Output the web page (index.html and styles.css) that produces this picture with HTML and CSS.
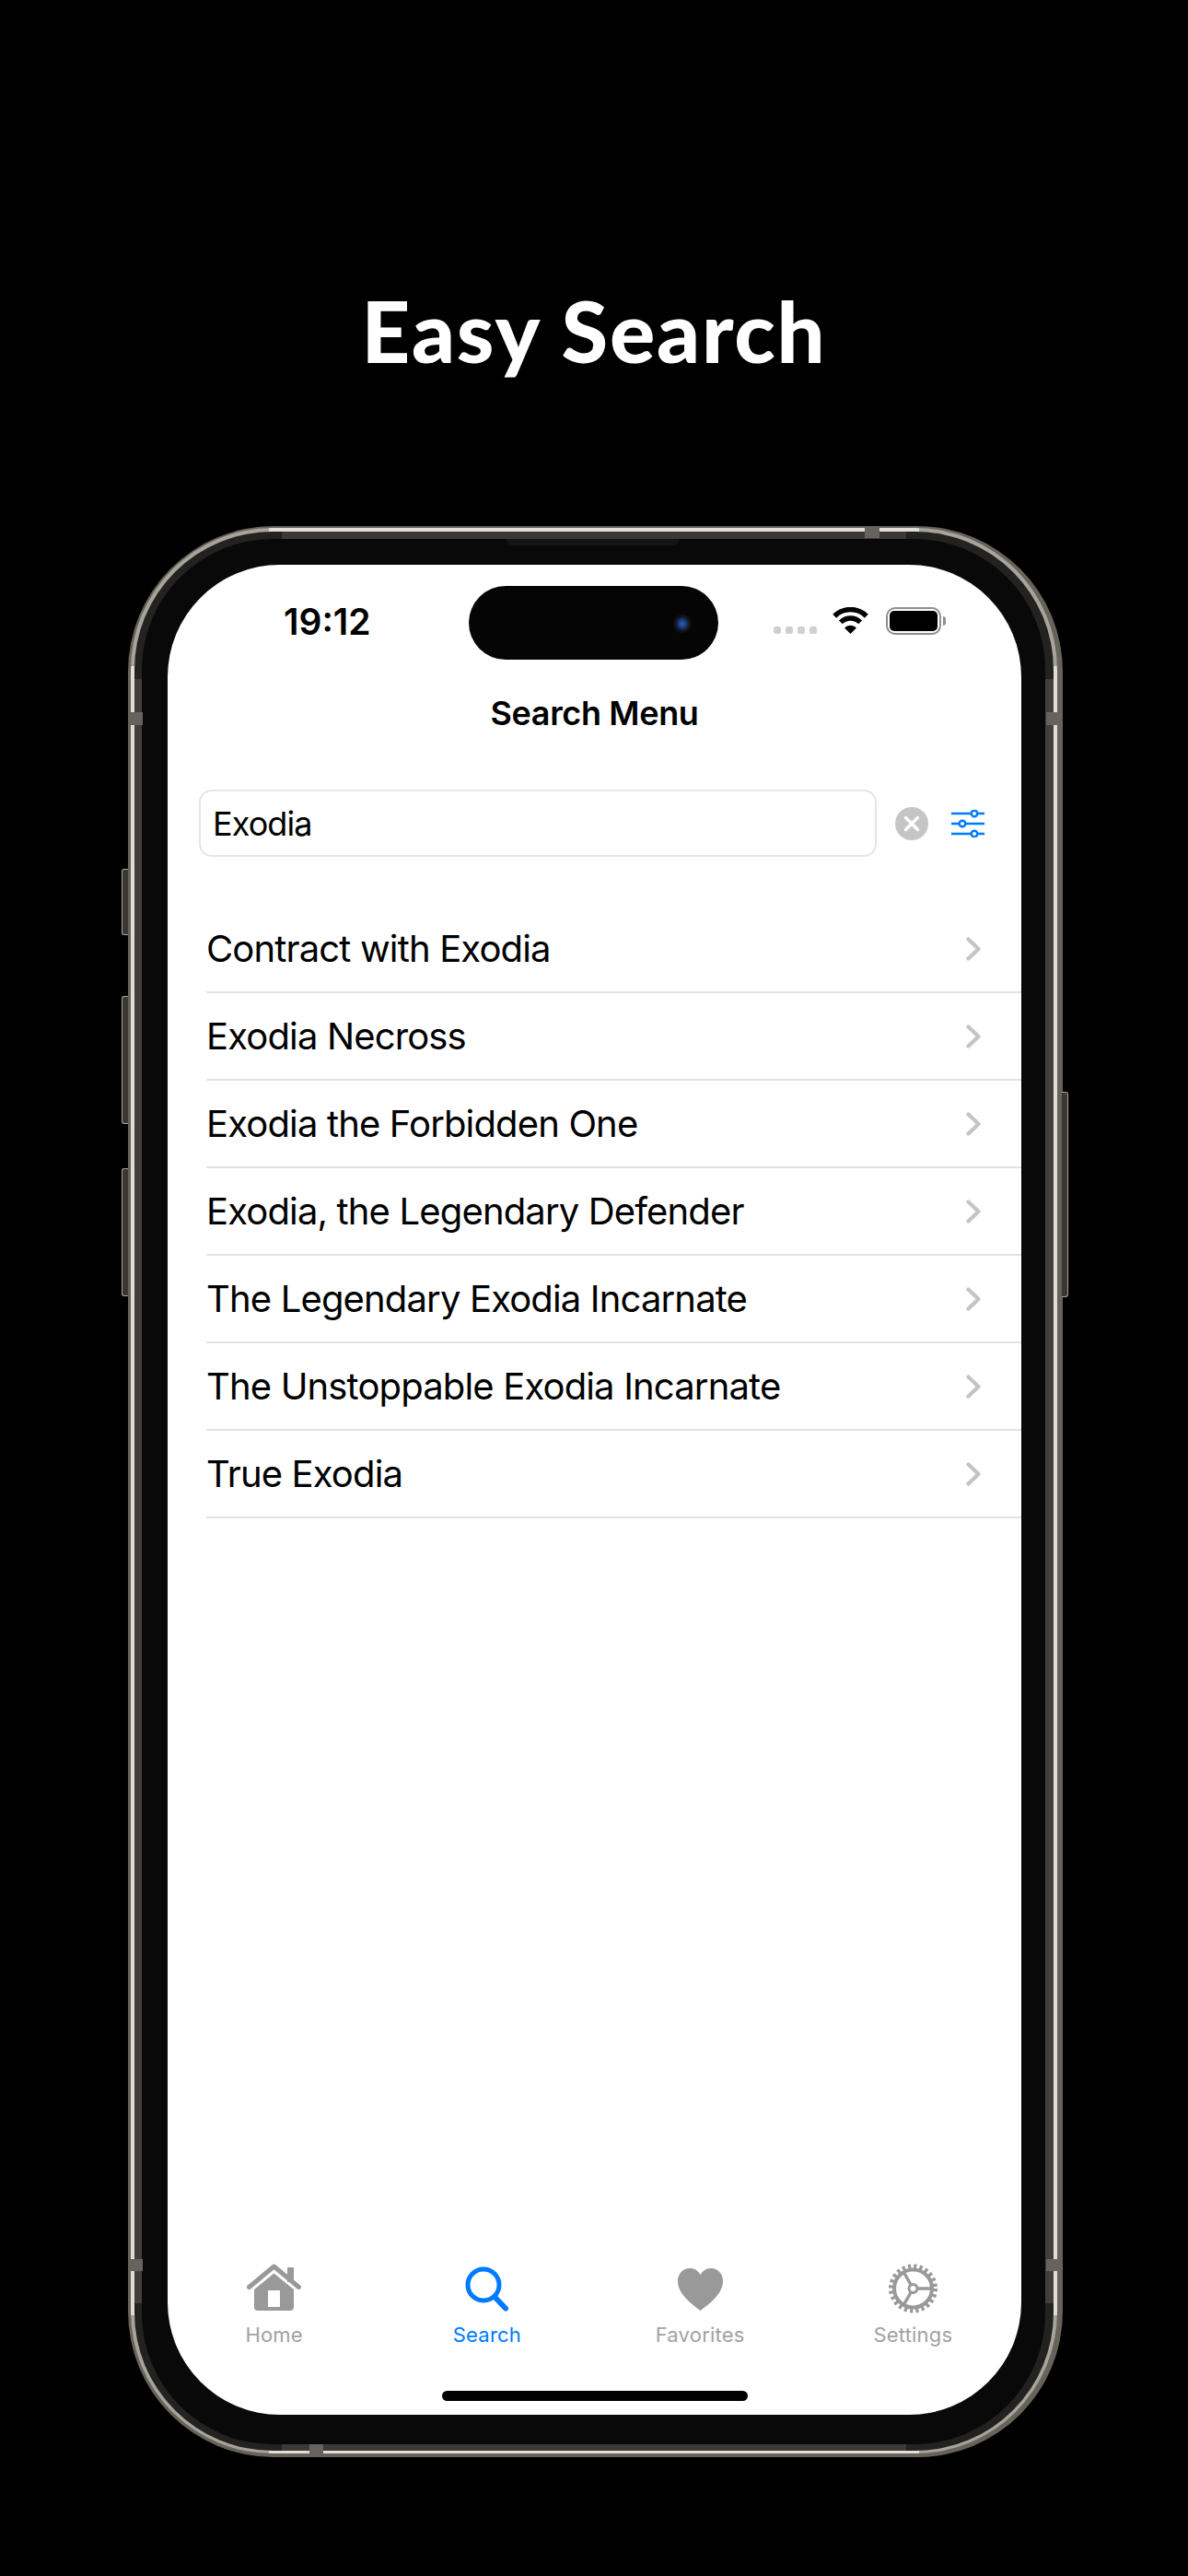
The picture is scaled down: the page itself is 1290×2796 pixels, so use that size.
FILE: index.html
```html
<!DOCTYPE html>
<html lang="en">
<head>
<meta charset="utf-8">
<title>Easy Search</title>
<link rel="stylesheet" href="styles.css">
</head>
<body>
<h1 class="headline">Easy Search</h1>
<div class="phone">
  <span class="btn btn-mute"></span><span class="btn btn-up"></span><span class="btn btn-down"></span><span class="btn btn-power"></span>
  <div class="rim-bright"><div class="rim-gray"><div class="bezel">
    <span class="speaker"></span>
    <main class="screen">
      <div class="status">
        <div class="time">19:12</div>
        <div class="island"><span class="camera"></span></div>
        <div class="status-icons">
          <div class="dots"><i></i><i></i><i></i><i></i></div>
          <svg class="wifi" width="41" height="29" viewBox="0 0 41 29"><path d="M3.2 9.7A24.5 24.5 0 0 1 37.8 9.7M9.9 16.4A15 15 0 0 1 31.1 16.4" fill="none" stroke="#000" stroke-width="5.5"/><path d="M20.5 29L14 22.5A9.2 9.2 0 0 1 27 22.5Z" fill="#000"/></svg>
          <div class="battery"><div class="battery-fill"></div></div>
          <div class="battery-nub"></div>
        </div>
      </div>
      <div class="title">Search Menu</div>
      <div class="search-row">
        <div class="field">Exodia</div>
        <svg class="clear" width="36" height="36" viewBox="0 0 36 36"><circle cx="18" cy="18" r="18" fill="#c5c5c5"/><path d="M11.5 11.5L24.5 24.5M24.5 11.5L11.5 24.5" stroke="#fff" stroke-width="3.4" stroke-linecap="round"/></svg>
        <svg class="filter" width="36" height="30" viewBox="0 0 36 30" fill="none" stroke="#007aff"><path d="M0 4H36M0 15H36M0 26H36" stroke-width="2.6"/><circle cx="25" cy="4" r="3.3" fill="#fff" stroke-width="2.4"/><circle cx="12" cy="15" r="3.3" fill="#fff" stroke-width="2.4"/><circle cx="25" cy="26" r="3.3" fill="#fff" stroke-width="2.4"/></svg>
      </div>
      <ul class="list">
        <li class="row">Contract with Exodia<svg class="chev" width="16" height="26" viewBox="0 0 16 26"><path d="M2.5 2.5L13.5 13L2.5 23.5" fill="none" stroke="#c4c4c4" stroke-width="4.2" stroke-linecap="round" stroke-linejoin="round"/></svg></li>
        <li class="row">Exodia Necross<svg class="chev" width="16" height="26" viewBox="0 0 16 26"><path d="M2.5 2.5L13.5 13L2.5 23.5" fill="none" stroke="#c4c4c4" stroke-width="4.2" stroke-linecap="round" stroke-linejoin="round"/></svg></li>
        <li class="row">Exodia the Forbidden One<svg class="chev" width="16" height="26" viewBox="0 0 16 26"><path d="M2.5 2.5L13.5 13L2.5 23.5" fill="none" stroke="#c4c4c4" stroke-width="4.2" stroke-linecap="round" stroke-linejoin="round"/></svg></li>
        <li class="row">Exodia, the Legendary Defender<svg class="chev" width="16" height="26" viewBox="0 0 16 26"><path d="M2.5 2.5L13.5 13L2.5 23.5" fill="none" stroke="#c4c4c4" stroke-width="4.2" stroke-linecap="round" stroke-linejoin="round"/></svg></li>
        <li class="row">The Legendary Exodia Incarnate<svg class="chev" width="16" height="26" viewBox="0 0 16 26"><path d="M2.5 2.5L13.5 13L2.5 23.5" fill="none" stroke="#c4c4c4" stroke-width="4.2" stroke-linecap="round" stroke-linejoin="round"/></svg></li>
        <li class="row">The Unstoppable Exodia Incarnate<svg class="chev" width="16" height="26" viewBox="0 0 16 26"><path d="M2.5 2.5L13.5 13L2.5 23.5" fill="none" stroke="#c4c4c4" stroke-width="4.2" stroke-linecap="round" stroke-linejoin="round"/></svg></li>
        <li class="row">True Exodia<svg class="chev" width="16" height="26" viewBox="0 0 16 26"><path d="M2.5 2.5L13.5 13L2.5 23.5" fill="none" stroke="#c4c4c4" stroke-width="4.2" stroke-linecap="round" stroke-linejoin="round"/></svg></li>
      </ul>
      <nav class="tabs">
        <div class="tab">
          <svg class="tab-icon" width="59" height="54" viewBox="0 0 59 54"><path d="M44 4h7v16h-7z" fill="#999"/><path d="M2.5 25.5L29.5 3L56.500 25.500" fill="none" stroke="#999" stroke-width="5" stroke-linecap="round" stroke-linejoin="round"/><path fill-rule="evenodd" d="M8 28L29.500 10.500L51 28V47a4 4 0 0 1-4 4H12a4 4 0 0 1-4-4ZM23 29V47H36V29Z" fill="#999"/></svg>
          <span>Home</span>
        </div>
        <div class="tab tab-on">
          <svg class="tab-icon" width="59" height="54" viewBox="0 0 59 54"><circle cx="26" cy="23" r="17" fill="none" stroke="#007aff" stroke-width="5"/><path d="M39 37L50 48.500" stroke="#007aff" stroke-width="6" stroke-linecap="round"/></svg>
          <span>Search</span>
        </div>
        <div class="tab">
          <svg class="tab-icon" width="59" height="54" viewBox="0 0 59 54"><path d="M29.500 51C25 47 5 35 5 19C5 11 10.500 5 18 5C23 5 27 7.500 29.500 12C32 7.500 36 5 41 5C48.500 5 54 11 54 19C54 35 34 47 29.500 51Z" fill="#999"/></svg>
          <span>Favorites</span>
        </div>
        <div class="tab">
          <svg class="tab-icon" width="59" height="54" viewBox="0 0 59 54" fill="none" stroke="#999"><circle cx="29.500" cy="27" r="24" stroke-width="5" stroke-dasharray="3.2 3.083"/><circle cx="29.500" cy="27" r="20.500" stroke-width="4"/><path d="M34 27H50M27.200 23L19.200 9.200M27.200 31L19.200 44.800" stroke-width="3.400"/><circle cx="29.500" cy="27" r="4.500" stroke-width="3"/></svg>
          <span>Settings</span>
        </div>
      </nav>
      <div class="home-indicator"></div>
    </main>
  </div></div></div>
  <span class="band band-lt"></span><span class="band band-rt"></span><span class="band band-top"></span><span class="band band-bot"></span><span class="band band-lb"></span><span class="band band-rb"></span>
</div>
</body>
</html>
```
FILE: styles.css
```css
* { box-sizing: border-box; }
html, body { margin: 0; padding: 0; }
body {
  width: 1290px;
  height: 2796px;
  background: #000;
  font-family: Inter, "Liberation Sans", sans-serif;
  color: #000;
  overflow: hidden;
}
.headline {
  margin: 0;
  height: 571px;
  padding-top: 304px;
  text-align: center;
  font-family: Lato, sans-serif;
  font-weight: 900;
  font-size: 92px;
  letter-spacing: 1.8px;
  line-height: 110px;
  color: #fff;
}
.phone {
  position: relative;
  width: 1015px;
  height: 2096px;
  margin-left: 139px;
  background: #66635b;
  border-radius: 158px;
  padding: 2px 6px 4px 3px;
}
.rim-bright {
  height: 100%;
  background:
    linear-gradient(#e2ded7, #e2ded7) center / 100% calc(100% - 300px) no-repeat,
    linear-gradient(#e2ded7, #e2ded7) center / calc(100% - 300px) 100% no-repeat,
    #a8a49c;
  border-radius: 154px;
  padding: 4px 4px 3px 4px;
}
.rim-gray {
  height: 100%;
  background:
    linear-gradient(#403f3e, #403f3e) center / 100% calc(100% - 320px) no-repeat,
    linear-gradient(#3a3936, #3a3936) center / calc(100% - 320px) 100% no-repeat,
    #222221;
  border-radius: 150px;
  padding: 8px 9px 7px 8px;
}
.bezel {
  position: relative;
  height: 100%;
  background: #090909;
  border-radius: 142px;
  padding: 28px 26px 32px 28px;
}
.speaker {
  position: absolute;
  left: 396px;
  top: 0;
  width: 187px;
  height: 7px;
  background: #141414;
  border-radius: 0 0 6px 6px;
}
.btn {
  position: absolute;
  width: 7px;
  background: #3a3632;
  border: 1.5px solid #a8a49c;
}
.btn-mute { left: -7px; top: 372px; height: 72px; border-right: 0; border-radius: 3px 0 0 3px; }
.btn-up { left: -7px; top: 510px; height: 139px; border-right: 0; border-radius: 3px 0 0 3px; }
.btn-down { left: -7px; top: 697px; height: 139px; border-right: 0; border-radius: 3px 0 0 3px; }
.btn-power { right: -6px; top: 614px; height: 223px; border-left: 0; border-radius: 0 3px 3px 0; }
.band { position: absolute; background: #66635f; }
.band-lt { left: 3px; top: 202px; width: 13px; height: 14px; }
.band-rt { right: 0; top: 202px; width: 18px; height: 14px; }
.band-top { left: 800px; top: 2px; width: 16px; height: 11px; }
.band-bot { left: 197px; bottom: 1px; width: 15px; height: 13px; }
.band-lb { left: 3px; top: 1881px; width: 13px; height: 13px; }
.band-rb { right: 0; top: 1881px; width: 18px; height: 13px; }

.screen {
  height: 100%;
  width: 927px;
  background: #fff;
  border-radius: 122px;
  overflow: hidden;
  display: flex;
  flex-direction: column;
}
.status {
  display: grid;
  grid-template-columns: 327px 271px 1fr;
  padding-top: 23px;
  height: 103px;
}
.time {
  padding: 16px 0 0 126px;
  font-size: 39px;
  line-height: 46px;
  font-weight: 600;
}
.island {
  height: 80px;
  background: #050505;
  border-radius: 40px;
  position: relative;
}
.camera {
  position: absolute;
  left: 222px;
  top: 31px;
  width: 20px;
  height: 20px;
  border-radius: 50%;
  background: radial-gradient(circle, #2c5fb0 0, #1c3a78 30%, #10131c 55%, #0b0b0e 100%);
}
.status-icons {
  display: flex;
  align-items: flex-start;
  padding: 23px 0 0 60px;
}
.dots { display: flex; gap: 5px; margin-top: 21px; }
.dots i { width: 8px; height: 8px; border-radius: 2.500px; background: #d0d0d0; }
.wifi { margin-left: 16px; }
.battery {
  margin-left: 18px;
  width: 60px;
  height: 30px;
  border: 2.500px solid #8e8e8e;
  border-radius: 10px;
  padding: 2px;
}
.battery-fill { height: 100%; background: #000; border-radius: 5px; }
.battery-nub { width: 3px; height: 10px; margin: 10px 0 0 2px; background: #8e8e8e; border-radius: 0 3px 3px 0; }
.title {
  text-align: center;
  font-size: 36px;
  font-weight: 600;
  line-height: 44px;
  padding-top: 36px;
  height: 141px;
  letter-spacing: -0.35px;
}
.search-row {
  display: flex;
  align-items: center;
  padding-left: 34px;
  height: 73px;
}
.field {
  width: 736px;
  height: 73px;
  border: 2px solid #e6e6e6;
  border-radius: 14px;
  padding-left: 13px;
  font-size: 36px;
  letter-spacing: -0.9px;
  line-height: 70px;
}
.clear { margin-left: 20px; }
.filter { margin-left: 25px; }
.list {
  list-style: none;
  margin: 53px 0 0;
  padding: 0 0 0 42px;
  flex: 1;
}
.row {
  display: flex;
  align-items: center;
  justify-content: space-between;
  height: 95px;
  padding: 0 44px 0 0;
  border-bottom: 2px solid #e2e2e2;
  font-size: 40px;
  letter-spacing: -0.85px;
}
.tabs {
  display: grid;
  grid-template-columns: repeat(4, 1fr);
  padding-right: 2px;
  height: 138px;
}
.tab {
  display: flex;
  flex-direction: column;
  align-items: center;
  font-size: 22px;
  line-height: 26px;
  font-weight: 400;
  letter-spacing: 0.2px;
  color: #a2a2a2;
}
.tab-on { color: #007aff; }
.tab-icon { margin-bottom: 10px; }
.home-indicator {
  width: 332px;
  height: 11px;
  margin: 0 auto 15px;
  background: #000;
  border-radius: 6px;
}
```
